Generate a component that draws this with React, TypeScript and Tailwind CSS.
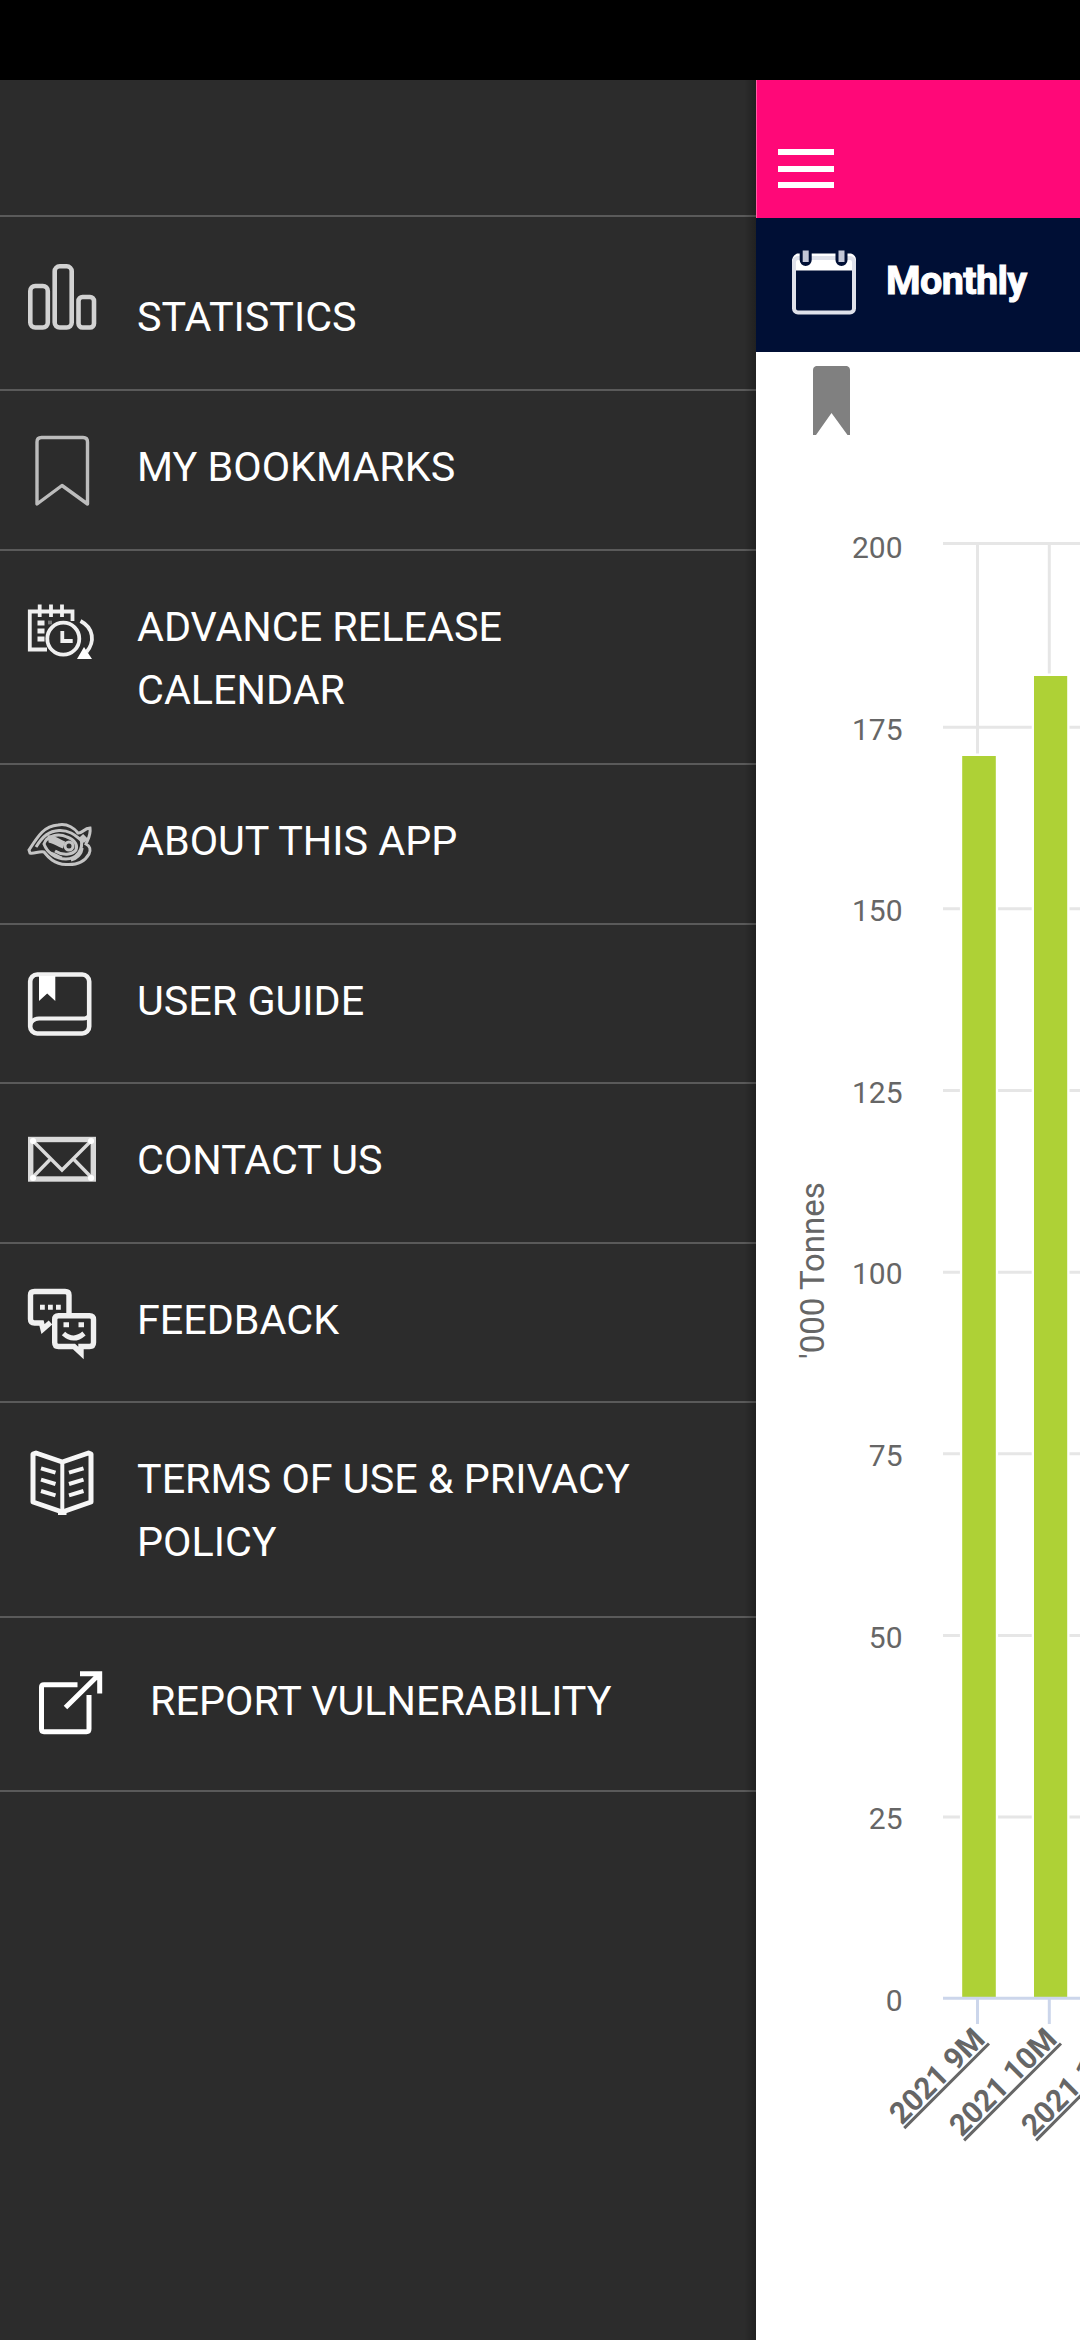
import type { ReactNode } from "react";

function Icon({ children, color = "#f0f0f0", width = 4 }: { children: ReactNode; color?: string; width?: number }) {
  return (
    <svg
      viewBox="0 0 80 80"
      className="mt-[38px] h-20 w-20 shrink-0 blur-[0.6px]"
      fill="none"
      stroke={color}
      strokeWidth={width}
    >
      {children}
    </svg>
  );
}

const statistics = (
  <Icon color="#d2d2d2" width={4.6}>
    <rect x="6.300" y="31" width="17.500" height="41.500" rx="5" />
    <rect x="30.700" y="11.300" width="17" height="61.200" rx="5" />
    <rect x="54.500" y="42" width="15.500" height="30.500" rx="4" />
  </Icon>
);

const bookmark = (
  <Icon color="#bcbcbc" width={3.4}>
    <path d="M13 75V13q0-4.500 4.500-4.500H59q4.500 0 4.500 4.500V75L38 56.500Z" strokeLinejoin="round" />
  </Icon>
);

const releaseCalendar = (
  <Icon width={3.8}>
    <path d="M48.500 32V22.500H5.800V60.500H23" />
    <path d="M15.700 15.500V28M27 15.500V28M38 15.500V28" />
    <circle cx="39.300" cy="49.700" r="16" />
    <path d="M38.300 42V52H48.700" />
    <path d="M56.500 32C70 39 71 53 62.500 63" />
    <path d="M53 70L60 58L68 70Z" fill="#fff" stroke="none" />
    <path d="M13.500 34H20.500M13.500 42H20.500M13.500 50H20.500" strokeWidth="5" />
    <path d="M24 33.500H28" stroke="#777" />
  </Icon>
);

const about = (
  <Icon color="#c4c4c4" width={3}>
    <path d="M5 47C14 33 20 23 34 22C44 20 51 26 54 30C58 31 60 25 66 25C67 32 64 36 62 41C66 43 67 47 65 51C60 60 50 62 42 61.500C30 61 24 54 20 49C15 48 10 51 6 50Z" />
    <path d="M12 44C19 33 25 28 35 27.500C46 27 52 33 57 37" />
    <path d="M57 36C60 47 52 56 42 56C31 56 23 49 20 41C23 32 35 30 43 34C51 37 54 42 52 47C48 52 39 53 31 48" />
    <path d="M24 36C29 35 34 40 40 42" strokeWidth="7.500" />
    <circle cx="45" cy="43" r="4" />
    <path d="M58 45C58 51 52 56 47 57M26 50C29 50 34 54 38 55" />
    <path d="M57 33L62 38" strokeWidth="6" />
  </Icon>
);

const guide = (
  <Icon width={4.6}>
    <rect x="6.200" y="11.500" width="59" height="59" rx="7" />
    <path d="M65 52Q64 55.500 59 55.500H15Q7 56 6 63" strokeWidth="4" />
    <path d="M15 13H31.300V38L23.200 30.500L15 38Z" fill="#fff" stroke="none" />
  </Icon>
);

const envelope = (
  <Icon color="#dadada" width={5.4}>
    <rect x="6.700" y="17.500" width="62.600" height="39.500" />
    <path d="M8 18L38 48L68 18M26.500 37L8 56M49.500 37L68 56" strokeWidth="3.400" />
    <path d="M9 19h.1M67 19h.1M9 56h.1M67 56h.1" stroke="#fff" strokeWidth="6" strokeLinecap="round" />
  </Icon>
);

const feedback = (
  <Icon width={5.4}>
    <path d="M45 31V13Q45 9.500 41 9.500H10.500Q6.500 9.500 6.500 13V37Q6.500 41 10.500 41H17.500L19 47L26.500 40.500" />
    <path d="M34.500 33.700H65.500Q69.500 33.700 69.500 37.500V60.500Q69.500 64.500 65.500 64.500H57V71L50 64.500H34.500Q30.700 64.500 30.700 60.500V37.500Q30.700 33.700 34.500 33.700Z" />
    <path d="M16 25.300h4.800M24 25.300h4.800M32 25.300h4.800M39.500 42.700h5.500M54.500 42.700h5.500" strokeWidth="5" />
    <path d="M39.500 51.500Q49.500 60.500 60 51.500" strokeWidth="5" />
  </Icon>
);

const terms = (
  <Icon color="#f6f6f6" width={5}>
    <path d="M38.300 21L12 12L9 13V61L38.300 71L67 61V13L64.500 12Z" strokeLinejoin="round" />
    <path d="M38.300 21V71" strokeWidth="4" />
    <path d="M17 27.300L31.500 31.700M17 38.600L31.500 43M17 50L31.500 54.300M59.500 27.300L45 31.700M59.500 38.600L45 43M59.500 50L45 54.300" strokeWidth="4" />
    <path d="M34 71.500H42.500" />
  </Icon>
);

const report = (
  <Icon color="#ffffff" width={5}>
    <path d="M53.500 28.700H20Q17.500 28.700 17.500 31V73Q17.500 75.700 20 75.700H62.500Q65 75.700 65 73V39" />
    <path d="M41.500 51.500L75 18.500M56 17.700H75.700V37.500" />
    <path d="M66 16H78V28Z" fill="#ffffff" stroke="none" />
  </Icon>
);

const items = [
  { label: "STATISTICS", icon: statistics, row: "h-[174px]", text: "pt-[69px] ml-[33px]" },
  { label: "MY BOOKMARKS", icon: bookmark, row: "h-[160px]", text: "pt-[45px] ml-[33px]" },
  { label: "ADVANCE RELEASE CALENDAR", icon: releaseCalendar, row: "h-[214px]", text: "pt-[45px] ml-[33px]" },
  { label: "ABOUT THIS APP", icon: about, row: "h-[160px]", text: "pt-[45px] ml-[33px]" },
  { label: "USER GUIDE", icon: guide, row: "h-[159px]", text: "pt-[45px] ml-[33px]" },
  { label: "CONTACT US", icon: envelope, row: "h-[160px]", text: "pt-[45px] ml-[33px]" },
  { label: "FEEDBACK", icon: feedback, row: "h-[159px]", text: "pt-[45px] ml-[33px]" },
  { label: "TERMS OF USE & PRIVACY POLICY", icon: terms, row: "h-[215px]", text: "pt-[45px] ml-[33px]" },
  { label: "REPORT VULNERABILITY", icon: report, row: "h-[174px]", text: "pt-[52px] ml-[46px]" },
];

function Drawer() {
  return (
    <nav className="flex w-[756px] shrink-0 flex-col bg-[#2c2c2c]">
      <div className="h-[137px] border-b-2 border-[#5a5a5a]" />
      {items.map((item) => (
        <div key={item.label} className={`flex items-start border-b-2 border-[#5a5a5a] pl-6 ${item.row}`}>
          {item.icon}
          <span className={`w-[520px] text-[41.3px] leading-[63px] text-white ${item.text}`}>{item.label}</span>
        </div>
      ))}
    </nav>
  );
}

const ticks = [200, 175, 150, 125, 100, 75, 50, 25, 0];
const gridLines = [191.4, 375.2, 556.8, 738.5, 920.2, 1101.8, 1283.4, 1465];
const bars = [
  { label: "2021 9M", x: 221.5, left: 206.2, width: 33.6, top: 404 },
  { label: "2021 10M", x: 293.3, left: 278, width: 33.2, top: 324 },
];

/* Column chart; its right part runs beyond the edge of the screen. */
function Chart() {
  return (
    <svg viewBox="0 0 324 1988" className="h-[1988px] w-[324px]" fontSize="30" fill="#666666">
      {gridLines.map((y) => (
        <path key={y} d={`M187 ${y}H324`} stroke="#e6e6e6" strokeWidth="3" />
      ))}
      {bars.map((b) => (
        <g key={b.label}>
          <path d={`M${b.x} 191V1646`} stroke="#e6e6e6" strokeWidth="3" />
          <rect x={b.left - 2.3} y={b.top - 2.5} width={b.width + 4.6} height={1648 - b.top} fill="#fff" />
          <rect x={b.left} y={b.top} width={b.width} height={1645 - b.top} fill="#aed136" />
          <path d={`M${b.x} 1646V1672`} stroke="#ccd6eb" strokeWidth="3" />
        </g>
      ))}
      <path d="M187 1646.300H324" stroke="#ccd6eb" strokeWidth="3" />
      {ticks.map((t, i) => (
        <text key={t} x="146.500" y={206 + i * 181.6} textAnchor="end">
          {t}
        </text>
      ))}
      <text transform="translate(68 1007) rotate(-90)" fontSize="33">
        '000 Tonnes
      </text>
      {["2021 9M", "2021 10M", "2021 11M"].map((label, i) => (
        <text
          key={label}
          transform={`translate(${230.5 + i * 72} 1689) rotate(-45)`}
          textAnchor="end"
          fontWeight="700"
          textDecoration="underline"
        >
          {label}
        </text>
      ))}
    </svg>
  );
}

function Content() {
  return (
    <main className="flex w-[324px] flex-col bg-white">
      <header className="flex h-[138px] flex-col gap-[10.5px] border-l border-[#ff5ca4] bg-[#ff0878] pt-[69px] pl-[21px]">
        <span className="h-1.5 w-14 bg-white" />
        <span className="h-1.5 w-14 bg-white" />
        <span className="h-1.5 w-14 bg-white" />
      </header>
      <div className="flex h-[134px] items-start bg-[#000f35] pt-8 pl-9">
        <svg viewBox="0 0 64 66" className="h-[66px] w-16 blur-[0.4px]" fill="none">
          <path d="M5 3.500H59Q64 5 64 10V20.500H0V10Q1 5 5 3.500Z" fill="#fff" />
          <rect x="2" y="8" width="60" height="54.500" rx="4" stroke="#dfe1ea" strokeWidth="4" />
          <path d="M13.700 -2V10M49.500 -2V10" stroke="#000f35" strokeWidth="12" strokeLinecap="round" />
          <path d="M13.700 0.500V12M49.500 0.500V12" stroke="#c3c6d6" strokeWidth="6" />
        </svg>
        <span className="ml-[30px] pt-2 text-[39.5px] leading-[46px] font-bold tracking-[-0.6px] text-white [-webkit-text-stroke:1px_white]">
          Monthly
        </span>
      </div>
      <div className="relative">
        <svg viewBox="0 0 37 70" className="absolute top-3.5 left-[57px] h-[70px] w-[37px] blur-[0.4px]">
          <path d="M3 0H34Q37 1 37 4V69H34.500L18.500 47L3 69H0V4Q0 1 3 0Z" fill="#808080" />
        </svg>
        <Chart />
      </div>
    </main>
  );
}

export default function App() {
  return (
    <div className="flex h-[2340px] w-[1080px] flex-col overflow-hidden bg-white font-[Roboto,sans-serif]">
      <div className="h-20 shrink-0 bg-black" />
      <div className="flex grow">
        <div className="relative flex">
          <Drawer />
          <div className="absolute inset-y-0 right-0 w-3 bg-linear-to-r from-transparent to-black/25" />
        </div>
        <Content />
      </div>
    </div>
  );
}
